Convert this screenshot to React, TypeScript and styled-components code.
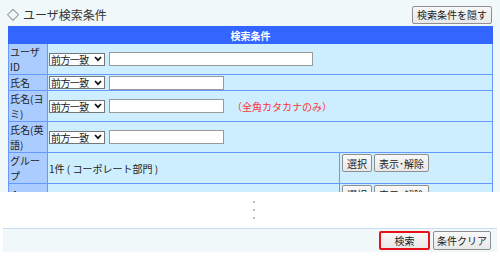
import styled, { createGlobalStyle } from 'styled-components';

const GlobalStyle = createGlobalStyle`
  body {
    margin: 0;
    background: #ffffff;
    font-family: 'Noto Sans CJK JP', 'Liberation Sans', sans-serif;
  }
`;

const Screen = styled.div`
  width: 500px;
  height: 258px;
  display: flex;
  flex-direction: column;
  overflow: hidden;
`;

const TopArea = styled.div`
  height: 192px;
  overflow: hidden;
  background: #f0f8fa;
  padding: 5px 8px 0 7px;
  box-sizing: border-box;
`;

const TitleBar = styled.div`
  display: flex;
  justify-content: space-between;
  align-items: center;
  height: 19px;
  margin-bottom: 2px;
`;

const Title = styled.div`
  font-size: 12px;
  color: #333;
  display: flex;
  align-items: center;
`;

const Diamond = styled.span`
  margin-right: 4px;
`;

const Button = styled.button<{ $primary?: boolean }>`
  font-family: inherit;
  font-size: 10px;
  line-height: 15px;
  height: ${(p) => (p.$primary ? '19px' : '18px')};
  padding: 0 4px;
  color: #222;
  white-space: nowrap;
  background: linear-gradient(#f8f8f8, #e8e8e8);
  border: ${(p) => (p.$primary ? '2px solid #e8101a' : '1px solid #8f8f8f')};
  border-radius: 2px;
  box-sizing: border-box;
  cursor: pointer;
`;

const SearchTable = styled.table`
  width: 485px;
  margin-left: 1px;
  border-collapse: collapse;
  font-size: 10px;
  color: #222;
  table-layout: fixed;
`;

const HeaderCell = styled.th`
  background: #3366ff;
  color: #ffffff;
  font-weight: bold;
  font-size: 10px;
  height: 16px;
  padding: 0;
  border: 1px solid #3366ff;
`;

const LabelCell = styled.td`
  background: #aaccff;
  border: 1px solid #6699ff;
  padding: 0 1px;
  line-height: 15px;
  vertical-align: middle;
  word-break: break-all;
`;

const ValueCell = styled.td<{ $top?: boolean }>`
  background: #cceeff;
  border: 1px solid #6699ff;
  padding: ${(p) => (p.$top ? '1px 2px 0' : '0 1px')};
  line-height: 15px;
  vertical-align: ${(p) => (p.$top ? 'top' : 'middle')};
  white-space: nowrap;
`;

const Field = styled.div`
  display: flex;
  align-items: center;
  gap: 4px;
`;

const SelectBox = styled.span`
  display: inline-flex;
  align-items: center;
  justify-content: space-between;
  width: 56px;
  height: 13px;
  box-sizing: border-box;
  background: #fff;
  border: 1px solid #767676;
  font-size: 10px;
  line-height: 11px;
  padding: 0 2px 0 1px;
  color: #222;
  letter-spacing: -0.6px;
  overflow: hidden;
`;

const TextInput = styled.input<{ $w: number }>`
  width: ${(p) => p.$w}px;
  height: 14px;
  box-sizing: border-box;
  border: 1px solid #999;
  background: #fff;
  padding: 0 2px;
  margin: 0;
`;

const Note = styled.span`
  color: #ff3333;
  margin-left: 4px;
`;

const ButtonRow = styled.div`
  display: flex;
  gap: 2px;
`;

const Omission = styled.div`
  height: 36px;
  background: #ffffff;
  display: flex;
  flex-direction: column;
  align-items: center;
  justify-content: center;
  gap: 6px;
  padding-left: 8px;
`;

const Dot = styled.span`
  width: 2px;
  height: 2px;
  background: #a8a8a8;
  border-radius: 1px;
`;

const Footer = styled.div`
  margin: 0 3px;
  height: 23px;
  background: #f0f8fa;
  border-top: 1px solid #c8dcf6;
  display: flex;
  justify-content: flex-end;
  align-items: center;
  gap: 3px;
  padding-right: 6px;
`;

const Chevron = () => (
  <svg width="8" height="6" viewBox="0 0 8 6" style={{ flexShrink: 0 }}>
    <path d="M1 1 L4 4.2 L7 1" fill="none" stroke="#111" strokeWidth="1.7" />
  </svg>
);

const Select = () => (
  <SelectBox>
    前方一致
    <Chevron />
  </SelectBox>
);

const TextRow = ({ width, note }: { width: number; note?: string }) => (
  <Field>
    <Select />
    <TextInput $w={width} />
    {note && <Note>{note}</Note>}
  </Field>
);

const App = () => {
  return (
    <Screen>
      <GlobalStyle />
      <TopArea>
        <TitleBar>
          <Title>
            <Diamond>◇</Diamond>ユーザ検索条件
          </Title>
          <Button>検索条件を隠す</Button>
        </TitleBar>
        <SearchTable>
          <colgroup>
            <col style={{ width: 39 }} />
            <col style={{ width: 292 }} />
            <col />
          </colgroup>
          <thead>
            <tr>
              <HeaderCell colSpan={3}>検索条件</HeaderCell>
            </tr>
          </thead>
          <tbody>
            <tr>
              <LabelCell>ユーザ<br />ID</LabelCell>
              <ValueCell colSpan={2}>
                <TextRow width={204} />
              </ValueCell>
            </tr>
            <tr>
              <LabelCell>氏名</LabelCell>
              <ValueCell colSpan={2}>
                <TextRow width={115} />
              </ValueCell>
            </tr>
            <tr>
              <LabelCell>氏名(ヨ<br />ミ)</LabelCell>
              <ValueCell colSpan={2}>
                <TextRow width={115} note="（全角カタカナのみ）" />
              </ValueCell>
            </tr>
            <tr>
              <LabelCell>氏名(英<br />語)</LabelCell>
              <ValueCell colSpan={2}>
                <TextRow width={115} />
              </ValueCell>
            </tr>
            <tr>
              <LabelCell>グルー<br />プ</LabelCell>
              <ValueCell>1件 ( コーポレート部門 )</ValueCell>
              <ValueCell $top>
                <ButtonRow>
                  <Button>選択</Button>
                  <Button>表示･解除</Button>
                </ButtonRow>
              </ValueCell>
            </tr>
            <tr>
              <LabelCell>・<br />&nbsp;</LabelCell>
              <ValueCell>&nbsp;</ValueCell>
              <ValueCell $top>
                <ButtonRow>
                  <Button>選択</Button>
                  <Button>表示･解除</Button>
                </ButtonRow>
              </ValueCell>
            </tr>
          </tbody>
        </SearchTable>
      </TopArea>
      <Omission>
        <Dot />
        <Dot />
        <Dot />
      </Omission>
      <Footer>
        <Button $primary style={{ width: 51 }}>検索</Button>
        <Button style={{ height: 19, padding: '0 3px' }}>条件クリア</Button>
      </Footer>
    </Screen>
  );
};

export default App;
